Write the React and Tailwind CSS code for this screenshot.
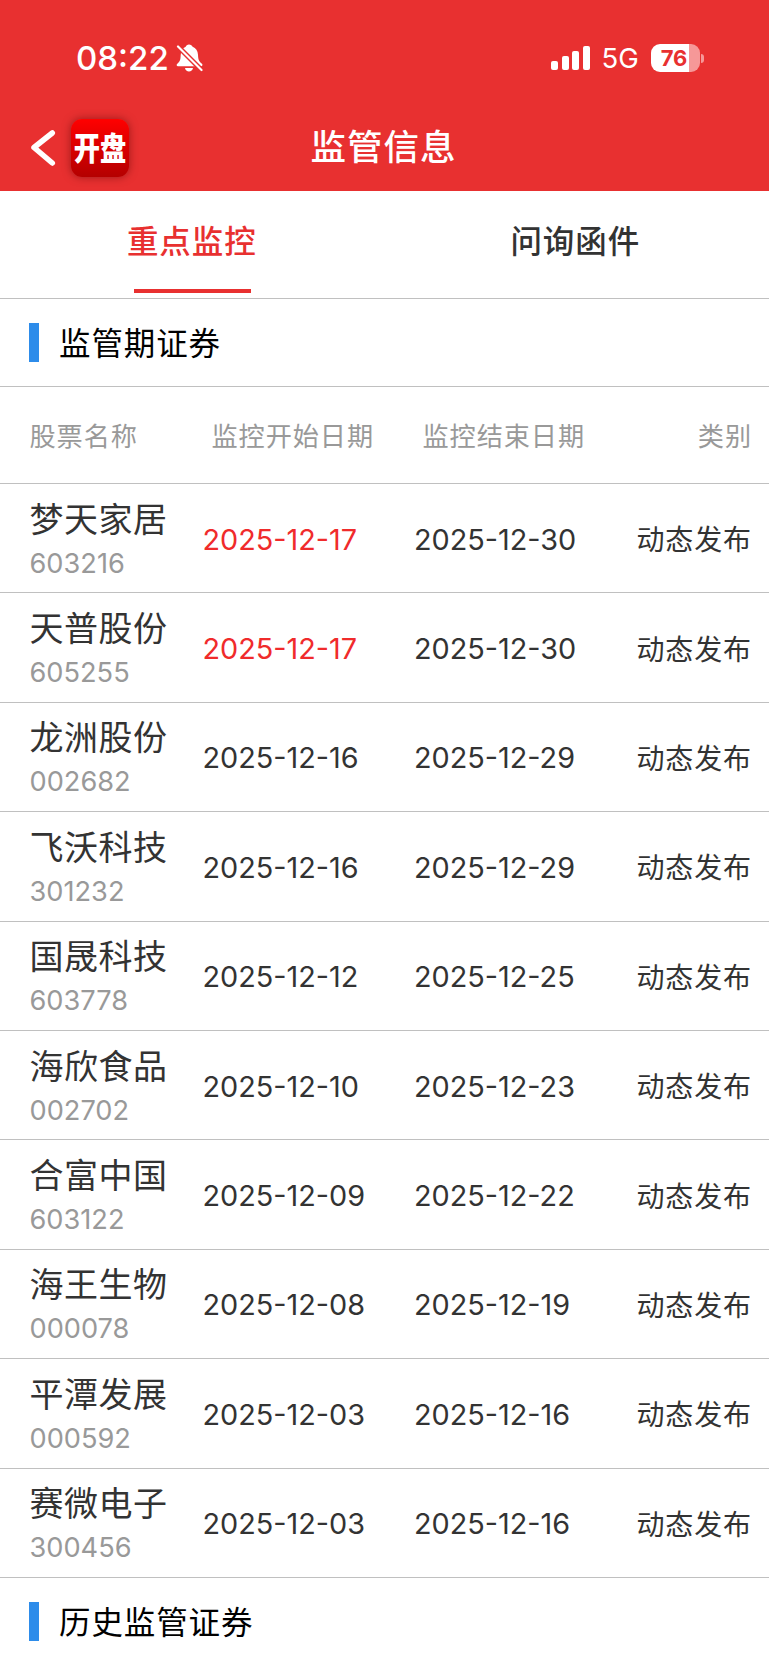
const stocks = [
  { name: "梦天家居", code: "603216", start: "2025-12-17", end: "2025-12-30", isNew: true },
  { name: "天普股份", code: "605255", start: "2025-12-17", end: "2025-12-30", isNew: true },
  { name: "龙洲股份", code: "002682", start: "2025-12-16", end: "2025-12-29" },
  { name: "飞沃科技", code: "301232", start: "2025-12-16", end: "2025-12-29" },
  { name: "国晟科技", code: "603778", start: "2025-12-12", end: "2025-12-25" },
  { name: "海欣食品", code: "002702", start: "2025-12-10", end: "2025-12-23" },
  { name: "合富中国", code: "603122", start: "2025-12-09", end: "2025-12-22" },
  { name: "海王生物", code: "000078", start: "2025-12-08", end: "2025-12-19" },
  { name: "平潭发展", code: "000592", start: "2025-12-03", end: "2025-12-16" },
  { name: "赛微电子", code: "300456", start: "2025-12-03", end: "2025-12-16" },
];

export default function App() {
  return (
    <div className="h-[1665px] w-[769px] overflow-hidden bg-white font-['Inter','Noto_Sans_CJK_SC',sans-serif] text-[#333]">
      <header className="h-[191px] bg-[#e83030] text-white">
        <StatusBar />
        <NavBar />
      </header>

      {/* Tabs */}
      <nav className="grid h-[108px] grid-cols-2 border-b border-[#c0c0c0] text-[31.5px] font-medium tracking-[0.9px]">
        <button className="flex flex-col items-center text-[#e83030]">
          <span className="mt-7 mr-px leading-[46px]">重点监控</span>
          <span className="mt-6 h-1 w-[117px] bg-[#e83030]" />
        </button>
        <button className="flex flex-col items-center">
          <span className="mt-7 mr-[3px] leading-[46px]">问询函件</span>
        </button>
      </nav>

      <SectionTitle>监管期证券</SectionTitle>

      <div className="flex h-[98px] items-center border-y border-[#c0c0c0] pt-[3px] text-[26.2px] tracking-[0.9px] text-[#999]">
        <span className="ml-[29.5px] w-[182px]">股票名称</span>
        <span className="w-[211px]">监控开始日期</span>
        <span>监控结束日期</span>
        <span className="mr-[17px] ml-auto">类别</span>
      </div>

      {stocks.map((s) => (
        <StockRow key={s.code} stock={s} />
      ))}

      <SectionTitle>历史监管证券</SectionTitle>
    </div>
  );
}

function StatusBar() {
  return (
    <div className="flex h-[116px] items-center">
      <span className="ml-[76px] w-[100px] pt-px text-[33px] font-medium">08:22</span>
      <BellOff />
      <div className="mr-px ml-auto flex h-6 items-end gap-[3.5px]">
        <i className="h-[9px] w-[7px] rounded-[2px] bg-white" />
        <i className="h-[14px] w-[7px] rounded-[2px] bg-white" />
        <i className="h-[19px] w-[7px] rounded-[2px] bg-white" />
        <i className="h-6 w-[7px] rounded-[2px] bg-white" />
      </div>
      <span className="ml-[11px] w-[49px] pt-0.5 text-[27.5px]">5G</span>
      <div className="flex h-7 w-[49px] items-center justify-center rounded-[9px] bg-[linear-gradient(to_right,#fff_38px,#f69898_38px)] pr-0.5 text-[22px] font-bold text-[#e83030]">
        76
      </div>
      <i className="mr-[65px] ml-[1.5px] h-[9px] w-[3px] rounded-r-full bg-[#f69898]" />
    </div>
  );
}

function NavBar() {
  return (
    <div className="grid grid-cols-[1fr_auto_1fr] items-center pt-[3px]">
      <div className="flex items-center">
        <svg className="ml-[31px] h-[36px] w-[25px]" viewBox="0 0 25 36" fill="none" stroke="#fff" strokeWidth="5.5" strokeLinecap="round" strokeLinejoin="round">
          <path d="M21.3 3 3 17.5 21.3 33" />
        </svg>
        <div className="ml-[15px] flex h-[58px] w-[58px] items-center justify-center rounded-[11px] bg-linear-to-b from-[#ff0000] to-[#b40000] shadow-[0_0_8px_rgba(80,0,0,0.5)]">
          <span className="scale-x-[0.82] pt-0.5 text-[32px] leading-none font-black whitespace-nowrap">开盘</span>
        </div>
      </div>
      <h1 className="mr-[2px] text-[35.5px] leading-[58px] font-medium tracking-[1px]">监管信息</h1>
    </div>
  );
}

function BellOff() {
  return (
    <svg className="h-7 w-[27px]" viewBox="0 0 27 28">
      <path fill="#fff" d="M13 .5c1.8 0 3.2 1 3.6 2.3 3.3 1.2 5.2 4 5.4 8 .2 5 1 6.8 4 9 .8.7.5 2.4-.8 2.4H2c-1.5 0-1.8-1.7-.7-2.5C4 17.5 4.6 15.5 4.7 11c.1-4 2-7 5-8.2C10 1.5 11.3.5 13 .5ZM9 24h8c-.4 2-2 3.5-4 3.5S9.3 26 9 24Z" />
      <path stroke="#e83030" strokeWidth="5" d="M1 1.500 26 26.500" />
      <path stroke="#fff" strokeWidth="2.2" strokeLinecap="round" d="M2 2.5 25.5 26" />
    </svg>
  );
}

function SectionTitle({ children }) {
  return (
    <h2 className="flex h-[87px] items-center text-[31.5px] font-normal tracking-[0.9px] text-black">
      <span className="mr-5 ml-[29px] h-[39px] w-[10px] bg-[#2d8cea]" />
      <span className="pt-[3px]">{children}</span>
    </h2>
  );
}

function StockRow({ stock }) {
  return (
    <div className="flex h-[109.4px] items-center border-b border-[#c0c0c0] pt-[2px] text-[28.8px]">
      <div className="ml-[29.5px] w-[173px] pt-[3px]">
        <p className="text-[34px] leading-[44px] tracking-[0.5px]">{stock.name}</p>
        <p className="pt-[2px] text-[27.2px] leading-[40px] text-[#999]">{stock.code}</p>
      </div>
      <span className={stock.isNew ? "w-[211.5px] text-[#f02b2b]" : "w-[211.5px]"}>{stock.start}</span>
      <span>{stock.end}</span>
      <span className="mr-[17px] ml-auto pt-[2px] text-[28px] tracking-[0.9px]">动态发布</span>
    </div>
  );
}
